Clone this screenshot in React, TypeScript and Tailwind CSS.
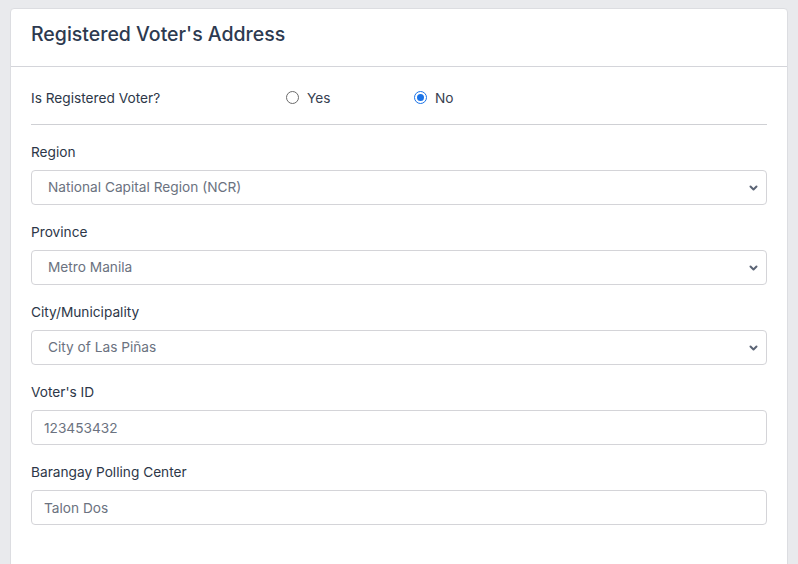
import { useState } from "react";

const FONT = "font-['Inter','Noto_Sans',sans-serif]";

function Chevron() {
  return (
    <svg
      className="pointer-events-none absolute right-[9px] top-1/2 -translate-y-1/2"
      width="9"
      height="7"
      viewBox="0 0 9 7"
    >
      <path d="M1.5 2 L4.5 5 L7.5 2" fill="none" stroke="#5b6475" strokeWidth="2" strokeLinecap="round" strokeLinejoin="round" />
    </svg>
  );
}

function SelectField({ label, value }: { label: string; value: string }) {
  return (
    <div className="mt-[17px]">
      <label className="block text-[13.7px] leading-[20px] text-[#2d3748]">{label}</label>
      <div className="relative mt-[8px]">
        <select
          defaultValue={value}
          className="block h-[35px] w-full appearance-none rounded-[4px] border border-[#d4d4d8] bg-white pl-[16px] pr-8 text-[13.7px] text-[#6b7280] outline-none"
        >
          <option>{value}</option>
        </select>
        <Chevron />
      </div>
    </div>
  );
}

function TextField({ label, value }: { label: string; value: string }) {
  return (
    <div className="mt-[17px]">
      <label className="block text-[13.7px] leading-[20px] text-[#2d3748]">{label}</label>
      <input
        defaultValue={value}
        className="mt-[8px] block h-[35px] w-full rounded-[4px] border border-[#d4d4d8] bg-white px-[12px] text-[13.7px] text-[#6b7280] outline-none"
      />
    </div>
  );
}

function Radio({ checked, label, onClick }: { checked: boolean; label: string; onClick: () => void }) {
  return (
    <button onClick={onClick} className="flex items-center gap-[8px]">
      {checked ? (
        <span className="flex h-[13px] w-[13px] items-center justify-center rounded-full border-[1.5px] border-[#1a73e8] bg-white">
          <span className="h-[7px] w-[7px] rounded-full bg-[#1a73e8]" />
        </span>
      ) : (
        <span className="h-[13px] w-[13px] rounded-full border border-[#6b6b6b] bg-white" />
      )}
      <span className="text-[13.7px] text-[#374151]">{label}</span>
    </button>
  );
}

export default function App() {
  const [registered, setRegistered] = useState(false);

  return (
    <div className={`min-h-screen bg-[#e9eaed] pl-[10px] pr-[10px] pt-[8px] ${FONT}`}>
      <div className="min-h-[560px] rounded-t-[4px] border border-[#dcdde1] bg-white">
        {/* Header */}
        <div className="h-[58px] border-b border-[#d4d5da] px-[20px] pt-[13px]">
          <h2 className="text-[19.5px] leading-[24px] font-medium text-[#2d3a50]">Registered Voter's Address</h2>
        </div>

        <div className="px-[20px] pt-[20px]">
          {/* Registered toggle */}
          <div className="flex h-[22px] items-center text-[13.7px] text-[#2d3748]">
            <span className="w-[255px]">Is Registered Voter?</span>
            <div className="w-[128px]">
              <Radio checked={registered} label="Yes" onClick={() => setRegistered(true)} />
            </div>
            <Radio checked={!registered} label="No" onClick={() => setRegistered(false)} />
          </div>

          <div className="mt-[15px] h-px bg-[#cfd0d4]" />

          <SelectField label="Region" value="National Capital Region (NCR)" />
          <SelectField label="Province" value="Metro Manila" />
          <SelectField label="City/Municipality" value="City of Las Piñas" />
          <TextField label="Voter's ID" value="123453432" />
          <TextField label="Barangay Polling Center" value="Talon Dos" />
        </div>
      </div>
    </div>
  );
}
